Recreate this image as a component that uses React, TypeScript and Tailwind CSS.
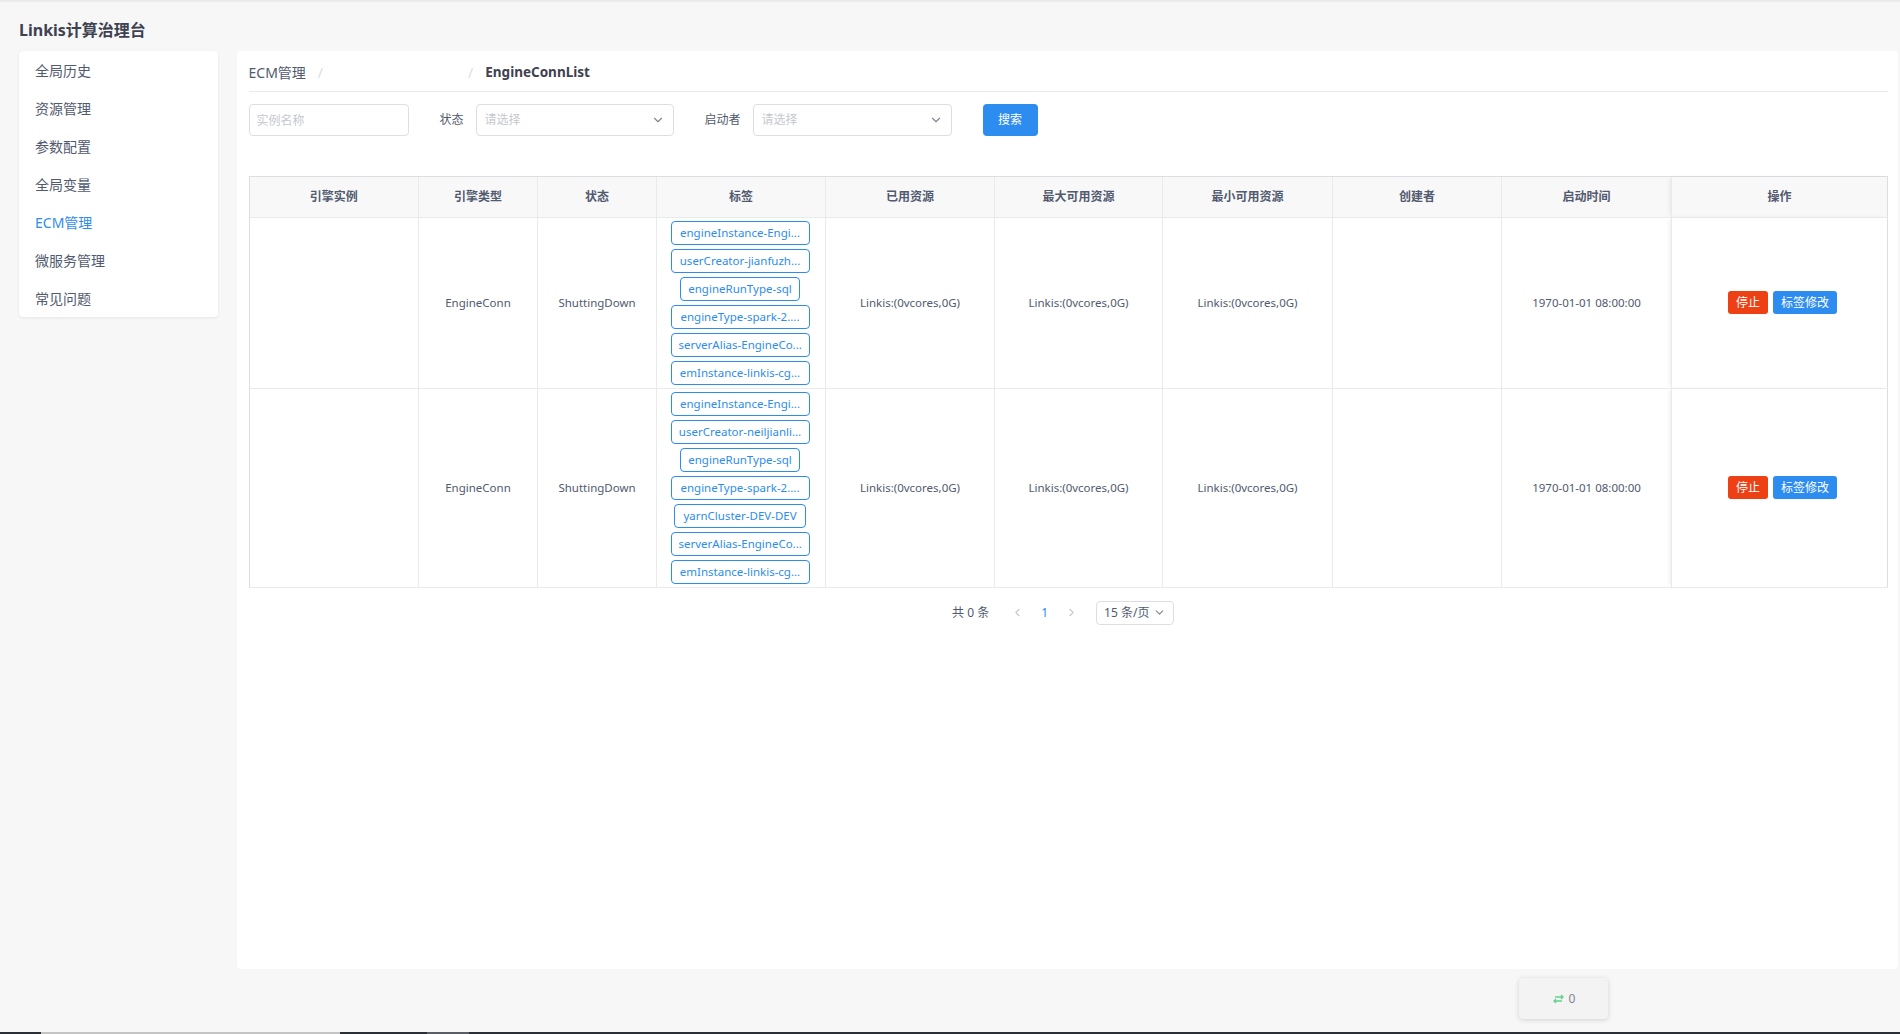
import { ChevronDown, ChevronLeft, ChevronRight } from "lucide-react";

const menu = ["全局历史", "资源管理", "参数配置", "全局变量", "ECM管理", "微服务管理", "常见问题"];

const columns = [
  { title: "引擎实例", w: "w-[169px]" },
  { title: "引擎类型", w: "w-[119px]" },
  { title: "状态", w: "w-[119px]" },
  { title: "标签", w: "w-[169px]" },
  { title: "已用资源", w: "w-[169px]" },
  { title: "最大可用资源", w: "w-[168px]" },
  { title: "最小可用资源", w: "w-[170px]" },
  { title: "创建者", w: "w-[169px]" },
  { title: "启动时间", w: "w-[170px]" },
  { title: "操作", w: "w-[216px]" },
];

type Tag = { text: string; w?: string };

const rows: { tags: Tag[] }[] = [
  {
    tags: [
      { text: "engineInstance-Engi...", w: "w-[139px]" },
      { text: "userCreator-jianfuzh...", w: "w-[139px]" },
      { text: "engineRunType-sql", w: "w-[120px]" },
      { text: "engineType-spark-2....", w: "w-[139px]" },
      { text: "serverAlias-EngineCo...", w: "w-[139px]" },
      { text: "emInstance-linkis-cg...", w: "w-[139px]" },
    ],
  },
  {
    tags: [
      { text: "engineInstance-Engi...", w: "w-[139px]" },
      { text: "userCreator-neiljianli...", w: "w-[139px]" },
      { text: "engineRunType-sql", w: "w-[120px]" },
      { text: "engineType-spark-2....", w: "w-[139px]" },
      { text: "yarnCluster-DEV-DEV", w: "w-[132px]" },
      { text: "serverAlias-EngineCo...", w: "w-[139px]" },
      { text: "emInstance-linkis-cg...", w: "w-[139px]" },
    ],
  },
];

const Select = ({ className }: { className: string }) => (
  <div
    className={`h-[32px] border border-[#dcdee2] rounded-[4px] bg-white flex items-center justify-between pl-[8px] pr-[8px] ${className}`}
  >
    <span className="text-[12px] text-[#c5c8ce]">请选择</span>
    <ChevronDown size={14} className="text-[#808695]" />
  </div>
);

const Cell = ({ children }: { children?: React.ReactNode }) => (
  <td className="border-r border-b border-[#e8eaec] text-center align-middle text-[11.5px] text-[#515a6e]">
    {children}
  </td>
);

export default function App() {
  return (
    <div className="relative h-[1034px] w-[1900px] overflow-hidden bg-[#f7f7f7] flex flex-col font-['Noto_Sans','Noto_Sans_CJK_SC',sans-serif]">
      <div className="h-[3px] bg-gradient-to-b from-[#e6e6e6] to-[#f7f7f7]" />
      {/* Title */}
      <div className="h-[48px] flex items-center pl-[19px] pt-[5px]">
        <h1 className="text-[16px] font-bold text-[#3d4150]">Linkis计算治理台</h1>
      </div>

      <div className="flex-1 flex items-start pl-[19px] pr-[2px]">
        {/* Sidebar */}
        <nav className="w-[200px] bg-white rounded-[4px] shadow-[0_1px_3px_rgba(0,0,0,0.08)]">
          {menu.map((m) => (
            <div
              key={m}
              className={`h-[38px] flex items-center pl-[16px] text-[14px] ${
                m === "ECM管理" ? "text-[#2d8cf0]" : "text-[#515a6e]"
              }`}
            >
              {m}
            </div>
          ))}
        </nav>

        {/* Main card */}
        <main className="ml-[19px] flex-1 h-[918px] bg-white rounded-[4px] pl-[12px] pr-[10px]">
          {/* Breadcrumb */}
          <div className="h-[41px] pt-[3px] flex items-center border-b border-[#e8eaec] text-[14px]">
            <span className="text-[#515a6e]">ECM管理</span>
            <span className="mx-[12px] text-[#dcdee2]">/</span>
            <span className="w-[121px]" />
            <span className="mx-[12px] text-[#dcdee2]">/</span>
            <span className="font-bold text-[13.5px] text-[#3d4150]">EngineConnList</span>
          </div>

          {/* Filters */}
          <div className="mt-[12px] flex items-center">
            <input
              placeholder="实例名称"
              className="w-[160px] h-[32px] border border-[#dcdee2] rounded-[4px] px-[7px] text-[12px] outline-none placeholder:text-[#c5c8ce]"
            />
            <span className="ml-[31px] mr-[12px] text-[12px] text-[#515a6e]">状态</span>
            <Select className="w-[198px]" />
            <span className="ml-[31px] mr-[12px] text-[12px] text-[#515a6e]">启动者</span>
            <Select className="w-[199px]" />
            <button className="ml-[31px] w-[55px] h-[32px] rounded-[4px] bg-[#2d8cf0] text-white text-[12px]">
              搜索
            </button>
          </div>

          {/* Table */}
          <div className="mt-[40px] border-l border-t border-[#dcdee2]">
            <table className="w-full table-fixed border-collapse">
              <colgroup>
                {columns.map((c) => (
                  <col key={c.title} className={c.w} />
                ))}
              </colgroup>
              <thead>
                <tr className="h-[40px] bg-[#f8f8f9]">
                  {columns.map((c, i) => (
                    <th
                      key={c.title}
                      className={`border-r border-b border-[#e8eaec] text-[12px] font-bold text-[#515a6e] ${
                        i === 9 ? "shadow-[-3px_0_5px_-2px_rgba(0,0,0,0.12)] border-r-[#dcdee2]" : ""
                      }`}
                    >
                      {c.title}
                    </th>
                  ))}
                </tr>
              </thead>
              <tbody>
                {rows.map((r, ri) => (
                  <tr key={ri}>
                    <Cell />
                    <Cell>EngineConn</Cell>
                    <Cell>ShuttingDown</Cell>
                    <td className="border-r border-b border-[#e8eaec] p-0">
                      <div className="flex flex-col items-center gap-[4px] py-[3px] pr-[2px]">
                        {r.tags.map((t) => (
                          <span
                            key={t.text}
                            className={`block h-[24px] leading-[22px] px-[7px] text-center border border-[#2d8cf0] rounded-[4px] text-[11.5px] text-[#2d8cf0] whitespace-nowrap overflow-hidden ${t.w}`}
                          >
                            {t.text}
                          </span>
                        ))}
                      </div>
                    </td>
                    <Cell>Linkis:(0vcores,0G)</Cell>
                    <Cell>Linkis:(0vcores,0G)</Cell>
                    <Cell>Linkis:(0vcores,0G)</Cell>
                    <Cell />
                    <Cell>1970-01-01 08:00:00</Cell>
                    <td className="border-r border-b border-[#e8eaec] border-r-[#dcdee2] shadow-[-3px_0_5px_-2px_rgba(0,0,0,0.12)] text-center">
                      <div className="flex justify-center gap-[5px] pl-[6px]">
                        <button className="h-[23px] px-[8px] rounded-[3px] bg-[#ed4014] text-white text-[12px]">
                          停止
                        </button>
                        <button className="h-[23px] px-[8px] rounded-[3px] bg-[#2d8cf0] text-white text-[12px]">
                          标签修改
                        </button>
                      </div>
                    </td>
                  </tr>
                ))}
              </tbody>
            </table>
          </div>

          {/* Pagination */}
          <div className="mt-[13px] flex items-center justify-center text-[12px] text-[#515a6e] pr-[10px]">
            <span className="mr-[22px]">共 0 条</span>
            <ChevronLeft size={13} className="text-[#c5c8ce]" />
            <span className="mx-[17px] text-[#2d8cf0]">1</span>
            <ChevronRight size={13} className="text-[#c5c8ce]" />
            <div className="ml-[18px] h-[24px] px-[7px] border border-[#dcdee2] rounded-[4px] flex items-center gap-[4px]">
              <span>15 条/页</span>
              <ChevronDown size={13} className="text-[#808695]" />
            </div>
          </div>
        </main>
      </div>

      {/* Floating counter */}
      <div className="absolute left-[1519px] top-[978px] w-[89px] h-[41px] rounded-[4px] bg-[#f3f3f3] shadow-[0_1px_5px_rgba(0,0,0,0.15)] flex items-center justify-center gap-[4px] text-[12px] text-[#808695]">
        <svg width="13" height="10" viewBox="0 0 13 10" fill="none" stroke="#5fd38d" strokeWidth="1.3">
          <path d="M3 3h8M9 1l2 2-2 2" />
          <path d="M10 7H2M4 5L2 7l2 2" />
        </svg>
        <span>0</span>
      </div>

      {/* Bottom strip */}
      <div className="h-[2px] flex">
        <div className="w-[41px] bg-[#2a2e35]" />
        <div className="w-[299px] bg-[#c4c4c4]" />
        <div className="w-[87px] bg-[#2a2e35]" />
        <div className="w-[42px] bg-[#5a5d63]" />
        <div className="flex-1 bg-[#2a2e35]" />
      </div>
    </div>
  );
}
